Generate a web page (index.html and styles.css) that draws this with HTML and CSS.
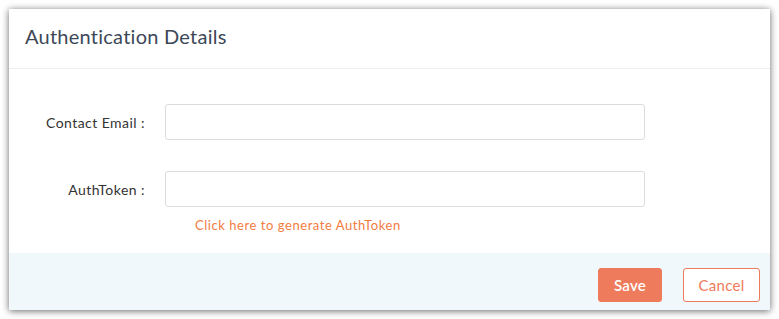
FILE: index.html
```html
<!DOCTYPE html>
<html>
<head>
<meta charset="utf-8">
<link rel="stylesheet" href="styles.css">
</head>
<body>
<div class="dialog">
  <div class="dialog-header">
    <h1 class="title">Authentication Details</h1>
  </div>
  <div class="dialog-body">
    <div class="row">
      <label class="label">Contact Email :</label>
      <div class="field"><input class="input" type="text"></div>
    </div>
    <div class="row row-second">
      <label class="label">AuthToken :</label>
      <div class="field">
        <input class="input" type="text">
        <a class="link" href="#">Click here to generate AuthToken</a>
      </div>
    </div>
  </div>
  <div class="dialog-footer">
    <button class="btn btn-primary">Save</button>
    <button class="btn btn-outline">Cancel</button>
  </div>
</div>
</body>
</html>
```

FILE: styles.css
```css
html, body {
  margin: 0;
  padding: 0;
  background: #ffffff;
}
body {
  padding: 9px;
  font-family: "Lato", "Open Sans", sans-serif;
}
.dialog {
  width: 761px;
  height: 301px;
  background: #fff;
  box-shadow: 0 1px 7px rgba(0, 0, 0, 0.6);
  display: flex;
  flex-direction: column;
}
.dialog-header {
  border-bottom: 1px solid #e9eff3;
  display: flex;
  align-items: center;
  padding-left: 16px;
  padding-bottom: 5px;
  box-sizing: border-box;
  flex: none;
  height: 60px;
}
.title {
  margin: 0;
  font-size: 20px;
  font-weight: 400;
  color: #3c4858;
  letter-spacing: 0.25px;
}
.dialog-body {
  flex: 1;
  padding-top: 35px;
  box-sizing: border-box;
}
.row {
  display: flex;
  align-items: flex-start;
  height: 36px;
}
.row-second {
  margin-top: 31px;
  height: auto;
}
.label {
  width: 136px;
  text-align: right;
  font-size: 14px;
  color: #333;
  line-height: 37px;
  height: 36px;
  letter-spacing: 0.45px;
  flex: none;
}
.field {
  margin-left: 20px;
  display: flex;
  flex-direction: column;
}
.input {
  width: 480px;
  height: 36px;
  box-sizing: border-box;
  border: 1px solid #dcdcdc;
  border-radius: 3px;
  margin: 0;
  outline: none;
}
.link {
  margin-top: 10px;
  margin-left: 30px;
  font-size: 13px;
  color: #f27c3f;
  text-decoration: none;
  letter-spacing: 0.55px;
}
.dialog-footer {
  height: 57px;
  flex: none;
  background: #f1f8fb;
  display: flex;
  justify-content: flex-end;
  align-items: center;
  padding-right: 10px;
  gap: 21px;
  box-sizing: border-box;
  padding-top: 7px;
}
.btn {
  height: 34px;
  font-family: "Lato", "Open Sans", sans-serif;
  font-size: 15px;
  border-radius: 3px;
  box-sizing: border-box;
  cursor: pointer;
  letter-spacing: 0.3px;
}
.btn-primary {
  width: 64px;
  background: #ee7b5b;
  border: 1px solid #ee7b5b;
  color: #fff;
  font-weight: 600;
}
.btn-outline {
  width: 77px;
  background: #fff;
  border: 1px solid #ee7b5b;
  color: #ee7b5b;
}
```
